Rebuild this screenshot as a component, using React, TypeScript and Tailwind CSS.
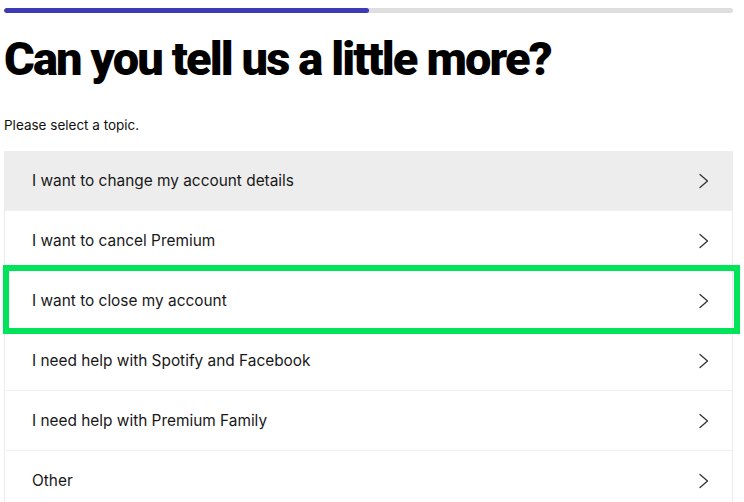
import React from "react";

const topics = [
  "I want to change my account details",
  "I want to cancel Premium",
  "I want to close my account",
  "I need help with Spotify and Facebook",
  "I need help with Premium Family",
  "Other",
];

function Chevron() {
  return (
    <svg width="12" height="16" viewBox="0 0 12 16" fill="none" className="shrink-0">
      <path d="M2 1.5 L9.5 8 L2 14.5" stroke="#333" strokeWidth="1.3" strokeLinecap="round" strokeLinejoin="round" />
    </svg>
  );
}

export default function App() {
  return (
    <div className="relative w-[744px] h-[502px] overflow-hidden bg-white" style={{ fontFamily: "Inter, 'Liberation Sans', sans-serif" }}>
      <div className="pt-[8px] pl-[4px] pr-[11px]">
        <div className="h-[5px] w-full rounded-full bg-[#dedede] overflow-hidden">
          <div className="h-full w-[50%] rounded-full bg-[#3c3ab4]" />
        </div>
      </div>
      <h1
        className="pl-[4px] mt-[18px] text-[47px] leading-[56px] font-black tracking-[-0.04em] text-black"
        style={{ fontFamily: "Roboto, 'Liberation Sans', sans-serif" }}
      >
        Can you tell us a little more?
      </h1>
      <p className="pl-[4px] mt-[30px] text-[13.5px] leading-[16px] text-[#111]">Please select a topic.</p>
      <div className="ml-[4px] mr-[11px] mt-[18px] border-l border-r border-[#ececec]">
        {topics.map((t, i) => (
          <div
            key={t}
            className={`flex items-center justify-between h-[60px] pl-[27px] pr-[22px] border-b border-[#f0f0f0] ${i === 0 ? "bg-[#ededed]" : "bg-white"}`}
          >
            <span className="text-[15.4px] text-[#181818]">{t}</span>
            <Chevron />
          </div>
        ))}
      </div>
      <div className="absolute left-[3px] top-[265px] w-[737px] h-[69px] border-[6px] border-[#00e45a] pointer-events-none" />
    </div>
  );
}
